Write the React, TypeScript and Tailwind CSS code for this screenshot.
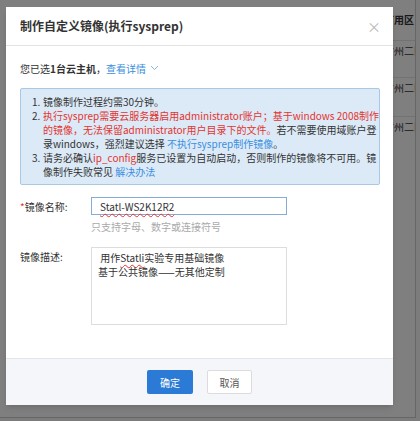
import React from 'react';

const font = { fontFamily: '"Noto Sans CJK SC", "Noto Sans", sans-serif' };

const bgRows = ['可用区', '广州二区', '广州二区', '广州二区'];

export default function App() {
  return (
    <div className="w-[420px] h-[421px] bg-[#7c7c7c] overflow-hidden" style={font}>
      <div className="relative w-[416px] h-[418px] bg-white border-r border-b border-[#666] overflow-hidden">
        {/* page behind the modal */}
        <div className="pl-[384px] pt-[10px] text-[10px] leading-[20px] text-[#333] whitespace-nowrap">
          <div className="font-bold">{bgRows[0]}</div>
          <div className="mt-[10px] border-t border-[#e5e5e5]">{bgRows[1]}</div>
          <div className="mt-[16px] border-t border-[#e5e5e5]">{bgRows[2]}</div>
          <div className="mt-[18px] border-t border-[#e5e5e5]">{bgRows[3]}</div>
        </div>

        {/* overlay */}
        <div className="absolute inset-0 bg-black/50" />

        {/* dialog */}
        <div className="absolute left-[6px] top-[7px] w-[387px] h-[398px] bg-white flex flex-col shadow-md">
          <div className="h-[39px] flex items-center justify-between px-[14px] border-b border-[#e3e3e3] shrink-0">
            <span className="text-[12px] font-semibold text-[#333]">制作自定义镜像(执行sysprep)</span>
            <span className="text-[14px] text-[#bbb] leading-none mr-[-2px]">×</span>
          </div>

          <div className="flex-1 pl-[14px] pr-[13px]">
            <div className="mt-[15px] h-[14px] flex items-center text-[10px] text-[#333]">
              <span>您已选</span>
              <span className="font-bold">1台云主机</span>
              <span>，</span>
              <span className="text-[#3a8ee0]">查看详情</span>
              <svg className="ml-[4px]" width="9" height="6" viewBox="0 0 9 6" fill="none">
                <path d="M1 1l3.5 3.5L8 1" stroke="#8fb6e0" strokeWidth="1" />
              </svg>
            </div>

            <div className="mt-[13px] h-[97px] bg-[#dceaf7] border border-[#a8c9e6] rounded-[2px] pl-[11px] pt-[6px] text-[10px] leading-[14px] text-[#333] whitespace-nowrap">
              <div className="flex">
                <span className="w-[11px]">1.</span>
                <span>镜像制作过程约需30分钟。</span>
              </div>
              <div className="flex">
                <span className="w-[11px]">2.</span>
                <div>
                  <div className="text-[#e3342f]">执行sysprep需要云服务器启用administrator账户；基于windows 2008制作</div>
                  <div>
                    <span className="text-[#e3342f]">的镜像，无法保留administrator用户目录下的文件。</span>
                    <span>若不需要使用域账户登</span>
                  </div>
                  <div>
                    <span>录windows，强烈建议选择 </span>
                    <span className="text-[#3a8ee0]">不执行sysprep制作镜像</span>
                    <span>。</span>
                  </div>
                </div>
              </div>
              <div className="flex">
                <span className="w-[11px]">3.</span>
                <div>
                  <div>
                    <span>请务必确认</span>
                    <span className="text-[#e3342f]">ip_config</span>
                    <span>服务已设置为自动启动，否则制作的镜像将不可用。镜</span>
                  </div>
                  <div>
                    <span>像制作失败常见 </span>
                    <span className="text-[#3a8ee0]">解决办法</span>
                  </div>
                </div>
              </div>
            </div>

            <div className="mt-[12px] flex">
              <label className="w-[71px] h-[18px] flex items-center text-[10px] text-[#333]">
                <span className="text-[#e3342f]">*</span>镜像名称:
              </label>
              <div>
                <div className="w-[196px] h-[18px] border border-[#86acd6] flex items-center pl-[8px] text-[10px] text-[#333]">
                  <span className="underline decoration-wavy decoration-[#e3342f] decoration-[1px] underline-offset-2">Statl-WS2K12R2</span>
                </div>
                <div className="mt-[6px] text-[10px] leading-[12px] text-[#aaa]">只支持字母、数字或连接符号</div>
              </div>
            </div>

            <div className="mt-[14px] flex">
              <label className="w-[71px] pt-[3px] text-[10px] leading-[14px] text-[#333]">镜像描述:</label>
              <div className="w-[196px] h-[78px] border border-[#ddd] pl-[6px] pt-[3px] text-[10px] leading-[14px] text-[#333]">
                <div>
                  &nbsp;用作<span className="underline decoration-wavy decoration-[#e3342f] decoration-[1px] underline-offset-2">Statli</span>实验专用基础镜像
                </div>
                <div>基于公共镜像——无其他定制</div>
              </div>
            </div>
          </div>

          <div className="h-[47px] shrink-0 bg-[#f4f6f9] border-t border-[#e3e6ea] flex items-center justify-center gap-[14px]">
            <button className="w-[46px] h-[24px] bg-[#2b7bd6] text-white text-[10px] rounded-[2px]">确定</button>
            <button className="w-[45px] h-[24px] bg-white border border-[#dcdcdc] text-[#555] text-[10px] rounded-[2px]">取消</button>
          </div>
        </div>
      </div>
    </div>
  );
}
